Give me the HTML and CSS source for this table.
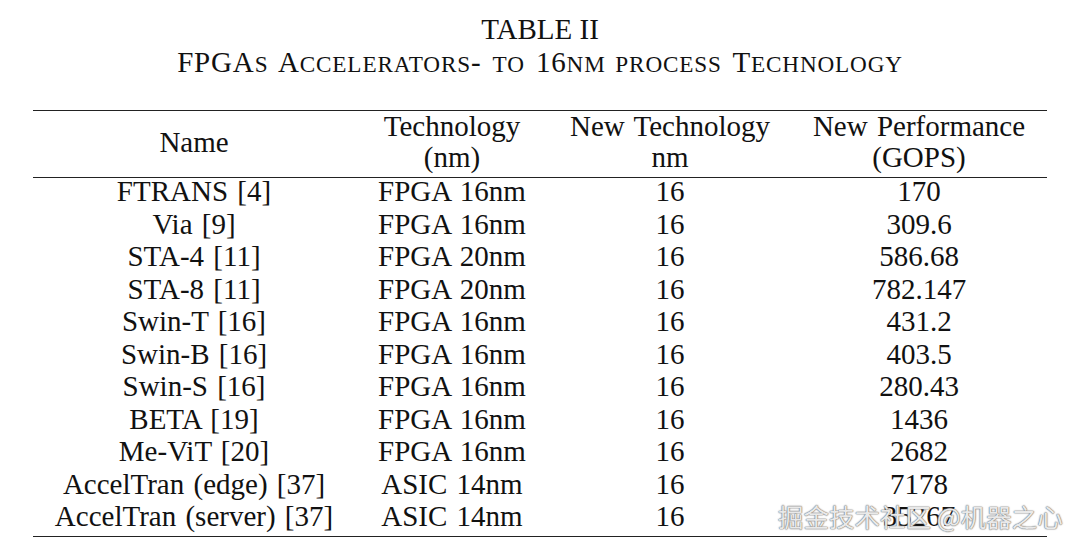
FILE: index.html
```html
<!DOCTYPE html>
<html>
<head>
<meta charset="utf-8">
<link rel="stylesheet" href="styles.css">
</head>
<body>
<div class="page">
  <div class="caption">
    <div class="caption-num">TABLE II</div>
    <div class="caption-title">FPGA<span class="sc">S</span> A<span class="sc">CCELERATORS</span>- <span class="sc">TO</span> 16<span class="sc">NM PROCESS</span> T<span class="sc">ECHNOLOGY</span></div>
  </div>
  <table class="data">
    <colgroup>
      <col class="c1"><col class="c2"><col class="c3"><col class="c4">
    </colgroup>
    <thead>
      <tr>
        <th>Name</th>
        <th>Technology<br>(nm)</th>
        <th>New Technology<br>nm</th>
        <th>New Performance<br>(GOPS)</th>
      </tr>
    </thead>
    <tbody>
      <tr><td>FTRANS [4]</td><td>FPGA 16nm</td><td>16</td><td>170</td></tr>
      <tr><td>Via [9]</td><td>FPGA 16nm</td><td>16</td><td>309.6</td></tr>
      <tr><td>STA-4 [11]</td><td>FPGA 20nm</td><td>16</td><td>586.68</td></tr>
      <tr><td>STA-8 [11]</td><td>FPGA 20nm</td><td>16</td><td>782.147</td></tr>
      <tr><td>Swin-T [16]</td><td>FPGA 16nm</td><td>16</td><td>431.2</td></tr>
      <tr><td>Swin-B [16]</td><td>FPGA 16nm</td><td>16</td><td>403.5</td></tr>
      <tr><td>Swin-S [16]</td><td>FPGA 16nm</td><td>16</td><td>280.43</td></tr>
      <tr><td>BETA [19]</td><td>FPGA 16nm</td><td>16</td><td>1436</td></tr>
      <tr><td>Me-ViT [20]</td><td>FPGA 16nm</td><td>16</td><td>2682</td></tr>
      <tr><td>AccelTran (edge) [37]</td><td>ASIC 14nm</td><td>16</td><td>7178</td></tr>
      <tr><td>AccelTran (server) [37]</td><td>ASIC 14nm</td><td>16</td><td>35267</td></tr>
    </tbody>
  </table>
  <div class="watermark">掘金技术社区 @机器之心</div>
</div>
</body>
</html>
```

FILE: styles.css
```css
html, body {
  margin: 0;
  padding: 0;
  background: #ffffff;
}

.page {
  position: relative;
  width: 1080px;
  height: 550px;
  overflow: hidden;
  font-family: "Liberation Serif", "Times New Roman", serif;
  color: #111111;
  font-size: 29px;
}

.caption {
  padding-top: 13px;
  text-align: center;
  line-height: 33px;
}

.caption-title {
  letter-spacing: 0.85px;
  word-spacing: 3px;
}

.sc {
  font-size: 0.8em;
}

.data {
  margin: 29px 0 0 33px;
  width: 1014px;
  border-collapse: collapse;
  border-top: 1.5px solid #222;
  border-bottom: 1.5px solid #222;
  word-spacing: 2px;
}

.c1 { width: 322px; }
.c2 { width: 194px; }
.c3 { width: 242px; }
.c4 { width: 256px; }

.data th {
  font-weight: normal;
  text-align: center;
  padding: 0 0 4px;
  line-height: 31px;
  border-bottom: 1.5px solid #222;
}

.data td {
  text-align: center;
  padding: 0 0 5.5px;
  line-height: 27px;
  height: 27px;
}

.watermark {
  position: absolute;
  left: 778px;
  top: 500px;
  font-family: "Noto Sans CJK SC", sans-serif;
  font-size: 25.5px;
  line-height: 32px;
  color: rgba(255, 255, 255, 0.85);
  text-shadow: 0 0 1px #777, 0 0 1px #777, 0 0 2px #999;
  white-space: nowrap;
}
```
